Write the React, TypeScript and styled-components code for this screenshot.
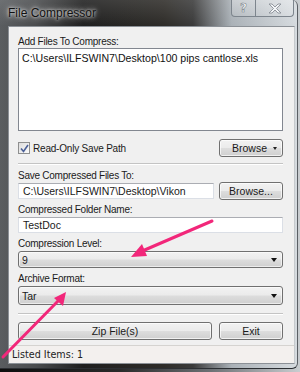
import React from 'react';
import styled, { createGlobalStyle } from 'styled-components';

const GlobalStyle = createGlobalStyle`
  html, body { margin: 0; padding: 0; }
  body { background: #1b1b1b; font-family: 'Liberation Sans', Arial, sans-serif; }
`;

const uiFont = `'Liberation Sans', Arial, sans-serif`;

export default function App() {
  return (
    <>
      <GlobalStyle />
      <Desktop>
        <Window>
          <TitleBar>
            <Title>File Compressor</Title>
            <CaptionButtons>
              <CaptionButton $w={25}>
                <HelpGlyph>?</HelpGlyph>
              </CaptionButton>
              <CaptionButton $w={39}>
                <svg width="14" height="11" viewBox="0 0 14 11">
                  <path
                    d="M1 1 L4 1 L7 4 L10 1 L13 1 L8.5 5.5 L13 10 L10 10 L7 7 L4 10 L1 10 L5.5 5.5 Z"
                    fill="#f4f6f8"
                    stroke="#8a9097"
                    strokeWidth="0.9"
                    strokeLinejoin="round"
                  />
                </svg>
              </CaptionButton>
            </CaptionButtons>
          </TitleBar>

          <Client>
            <Body>
              <Label>Add Files To Compress:</Label>
              <ListBox>
                <ListItem>C:\Users\ILFSWIN7\Desktop\100 pips cantlose.xls</ListItem>
              </ListBox>

              <Row $mt={8}>
                <CheckRow>
                  <CheckBox>
                    <svg width="9" height="9" viewBox="0 0 9 9">
                      <path d="M1 4.5 L3.5 7.5 L8 1" fill="none" stroke="#4a5f97" strokeWidth="1.6" />
                    </svg>
                  </CheckBox>
                  <CheckText>Read-Only Save Path</CheckText>
                </CheckRow>
                <Button $w={64}>
                  <span>Browse</span>
                  <SmallArrow />
                </Button>
              </Row>

              <Separator $mt={6} />

              <Label $mt={4}>Save Compressed Files To:</Label>
              <Row>
                <TextBox $w={196}>C:\Users\ILFSWIN7\Desktop\Vikon</TextBox>
                <Button $w={64} $center>Browse...</Button>
              </Row>

              <Label $mt={3}>Compressed Folder Name:</Label>
              <TextBox $mt={1}>TestDoc</TextBox>

              <Label $mt={4}>Compression Level:</Label>
              <Combo $mt={1} $h={17}>
                <span>9</span>
                <ComboArrow />
              </Combo>

              <Label $mt={4}>Archive Format:</Label>
              <Combo $mt={1} $h={19}>
                <span>Tar</span>
                <ComboArrow />
              </Combo>

              <Separator $mt={8} />

              <Row $mt={7}>
                <Button $w={194} $center>Zip File(s)</Button>
                <Button $w={64} $center>Exit</Button>
              </Row>
            </Body>

            <StatusBar>Listed Items: 1</StatusBar>
          </Client>

          <Annotations width="300" height="372" viewBox="0 0 300 372">
            <g stroke="#f2277a" strokeWidth="3" strokeLinecap="round" fill="#f2277a">
              <line x1="212" y1="221" x2="140" y2="252" />
              <polygon points="131,257 142,244 147,256" stroke="none" />
              <line x1="3" y1="357" x2="60" y2="299" />
              <polygon points="66,292 54,298 63,306" stroke="none" />
            </g>
          </Annotations>
        </Window>
      </Desktop>
    </>
  );
}

const Desktop = styled.div`
  position: relative;
  width: 300px;
  height: 372px;
  overflow: hidden;
  background: linear-gradient(90deg, #0e0e0e 0%, #2a2a2a 40%, #6c7074 70%, #c9cdd0 100%);
`;

const Window = styled.div`
  width: 298px;
  height: 369px;
  box-sizing: border-box;
  padding: 0 2px 4px 8px;
  display: flex;
  flex-direction: column;
  border-right: 1px solid #5a5f64;
  border-bottom: 1px solid #2c2f33;
  border-radius: 0 6px 6px 0;
  background:
    linear-gradient(180deg, rgba(255, 255, 255, 0.12) 0px, rgba(255, 255, 255, 0) 26px),
    linear-gradient(90deg, #5a5d60 0%, #4a4c4e 12%, #1f1f1f 28%, #2e2c28 55%, #3a3a3a 65%, #aab1b7 78%, #d6dbdf 100%);
`;

const TitleBar = styled.div`
  height: 26px;
  display: flex;
  align-items: flex-start;
  justify-content: space-between;
  margin-left: -8px;
  padding-left: 8px;
`;

const Title = styled.div`
  margin-top: 6px;
  font-family: ${uiFont};
  font-size: 12px;
  color: #111;
  text-shadow: 0 0 6px rgba(255, 255, 255, 0.9), 0 0 3px rgba(255, 255, 255, 0.9);
`;

const CaptionButtons = styled.div`
  display: flex;
  margin-right: 1px;
`;

const CaptionButton = styled.div<{ $w: number }>`
  width: ${p => p.$w}px;
  height: 17px;
  box-sizing: border-box;
  display: flex;
  align-items: center;
  justify-content: center;
  border: 1px solid #7d858d;
  border-top: none;
  margin-left: -1px;
  background: linear-gradient(180deg, rgba(255, 255, 255, 0.3), rgba(255, 255, 255, 0.1));
  &:first-child { border-bottom-left-radius: 4px; }
  &:last-child { border-bottom-right-radius: 4px; }
`;

const HelpGlyph = styled.span`
  font-family: 'DejaVu Sans', sans-serif;
  font-weight: bold;
  font-size: 12px;
  color: #f7f8f9;
  -webkit-text-stroke: 0.6px #7e858c;
  line-height: 1;
`;

const Client = styled.div`
  flex: 1;
  display: flex;
  flex-direction: column;
  background: #f0f0f0;
  border: 1px solid #8b9096;
  border-right-color: #c6cacd;
`;

const Body = styled.div`
  flex: 1;
  display: flex;
  flex-direction: column;
  padding: 8px 11px 0 9px;
`;

const Label = styled.div<{ $mt?: number }>`
  margin-top: ${p => p.$mt ?? 0}px;
  height: 13px;
  line-height: 13px;
  font-family: ${uiFont};
  font-size: 10px;
  letter-spacing: -0.25px;
  color: #1a1a1a;
`;

const ListBox = styled.div`
  height: 83px;
  box-sizing: border-box;
  background: #fff;
  border: 1px solid #828790;
  padding: 3px 3px;
`;

const ListItem = styled.div`
  font-family: ${uiFont};
  font-size: 10.6px;
  color: #111;
  white-space: nowrap;
`;

const Row = styled.div<{ $mt?: number }>`
  margin-top: ${p => p.$mt ?? 0}px;
  height: 18px;
  display: flex;
  align-items: center;
  justify-content: space-between;
`;

const CheckRow = styled.div`
  display: flex;
  align-items: center;
  gap: 3px;
`;

const CheckBox = styled.div`
  width: 12px;
  height: 12px;
  box-sizing: border-box;
  border: 1px solid #8e8f8f;
  background: linear-gradient(135deg, #dcdcdc, #fbfbfb);
  display: flex;
  align-items: center;
  justify-content: center;
`;

const CheckText = styled.span`
  font-family: ${uiFont};
  font-size: 10px;
  letter-spacing: -0.2px;
  color: #1a1a1a;
`;

const Button = styled.div<{ $w: number; $center?: boolean }>`
  width: ${p => p.$w}px;
  height: 18px;
  box-sizing: border-box;
  border: 1px solid #707070;
  border-radius: 3px;
  background: linear-gradient(180deg, #f2f2f2 0%, #ebebeb 48%, #dddddd 52%, #cfcfcf 100%);
  box-shadow: inset 0 0 0 1px rgba(255, 255, 255, 0.7);
  display: flex;
  align-items: center;
  justify-content: ${p => (p.$center ? 'center' : 'space-between')};
  padding: 0 5px 0 ${p => (p.$center ? 5 : 12)}px;
  font-family: ${uiFont};
  font-size: 10.5px;
  color: #1a1a1a;
`;

const SmallArrow = styled.span`
  width: 0;
  height: 0;
  border-left: 2.5px solid transparent;
  border-right: 2.5px solid transparent;
  border-top: 3px solid #222;
`;

const TextBox = styled.div<{ $w?: number; $mt?: number }>`
  margin-top: ${p => p.$mt ?? 0}px;
  width: ${p => (p.$w ? `${p.$w}px` : 'auto')};
  height: 16px;
  box-sizing: border-box;
  background: #fff;
  border: 1px solid #dbdfe6;
  border-top-color: #abadb3;
  padding: 0 4px;
  line-height: 14px;
  font-family: ${uiFont};
  font-size: 10.5px;
  color: #1a1a1a;
  white-space: nowrap;
`;

const Combo = styled.div<{ $mt?: number; $h: number }>`
  margin-top: ${p => p.$mt ?? 0}px;
  height: ${p => p.$h}px;
  box-sizing: border-box;
  border: 1px solid #707070;
  border-radius: 3px;
  background: linear-gradient(180deg, #f2f2f2 0%, #ebebeb 48%, #dddddd 52%, #cfcfcf 100%);
  box-shadow: inset 0 0 0 1px rgba(255, 255, 255, 0.6);
  display: flex;
  align-items: center;
  justify-content: space-between;
  padding: 0 5px 0 3px;
  font-family: ${uiFont};
  font-size: 10.5px;
  color: #1a1a1a;
`;

const ComboArrow = styled.span`
  width: 0;
  height: 0;
  border-left: 3.5px solid transparent;
  border-right: 3.5px solid transparent;
  border-top: 4px solid #111;
`;

const Separator = styled.div<{ $mt: number }>`
  margin-top: ${p => p.$mt}px;
  height: 0;
  border-top: 1px solid #c4c4c4;
  border-bottom: 1px solid #ffffff;
`;

const StatusBar = styled.div`
  height: 18px;
  box-sizing: border-box;
  border-top: 1px solid #d5d3d0;
  background: #f3f0ee;
  padding: 3px 0 0 3px;
  font-family: 'DejaVu Sans', sans-serif;
  font-size: 9.6px;
  color: #222;
`;

const Annotations = styled.svg`
  position: absolute;
  left: 0;
  top: 0;
  pointer-events: none;
`;
